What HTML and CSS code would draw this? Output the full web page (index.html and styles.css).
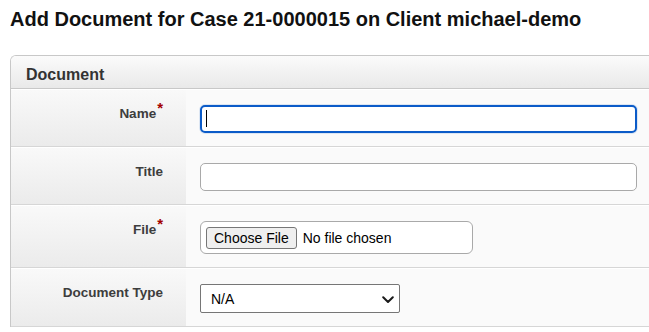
FILE: index.html
```html
<!DOCTYPE html>
<html lang="en">
<head>
    <meta charset="UTF-8">
    <meta name="viewport" content="width=device-width, initial-scale=1.0">
    <title>Add Document</title>
    <link rel="stylesheet" href="styles.css">
</head>
<body>

<div class="page">
    <h1>Add Document for Case 21-0000015 on Client michael-demo</h1>

    <form class="panel" action="#">
        <div class="panel-heading">Document</div>

        <div class="form-row">
            <label class="form-label" for="name">Name<sup class="req">*</sup></label>
            <div class="form-field">
                <span class="input-wrap">
                    <input type="text" id="name" name="name" class="text-input focused">
                    <span class="caret"></span>
                </span>
            </div>
        </div>

        <div class="form-row">
            <label class="form-label" for="title">Title</label>
            <div class="form-field">
                <input type="text" id="title" name="title" class="text-input">
            </div>
        </div>

        <div class="form-row">
            <label class="form-label" for="file">File<sup class="req">*</sup></label>
            <div class="form-field">
                <div class="file-box">
                    <input type="file" id="file" name="file">
                </div>
            </div>
        </div>

        <div class="form-row">
            <label class="form-label" for="docType">Document Type</label>
            <div class="form-field">
                <span class="select-wrap">
                    <select id="docType" name="docType">
                        <option>N/A</option>
                    </select>
                    <svg class="chevron" width="12" height="8" viewBox="0 0 12 8">
                        <path d="M1.2 1.3 L6 6 L10.8 1.3" fill="none" stroke="#1a1a1a" stroke-width="2" stroke-linecap="round" stroke-linejoin="round"/>
                    </svg>
                </span>
            </div>
        </div>
    </form>
</div>

</body>
</html>
```

FILE: styles.css
```css
body {
    font-family: "Liberation Sans", Arial, sans-serif;
    background-color: #fff;
    margin: 0;
    padding: 0;
    overflow: hidden;
}

.page {
    padding: 8px 0 0 10px;
}

h1 {
    font-size: 20px;
    line-height: 23px;
    color: #111;
    margin: 0 0 24px 0;
}

.panel {
    border: 1px solid #c8c8c8;
    border-right: none;
    border-bottom: none;
    border-radius: 6px 0 0 0;
    overflow: hidden;
}

.panel-heading {
    font-size: 16px;
    font-weight: bold;
    line-height: 18px;
    color: #333;
    padding: 10px 15px 4px;
    background: linear-gradient(#fbfbfb, #e9e9e9);
    border-bottom: 1px solid #c8c8c8;
}

.form-row {
    display: flex;
    margin-top: 1px;
    border-bottom: 1px solid #d6d6d6;
    background-color: #fafafa;
}

.form-label {
    width: 152px;
    flex-shrink: 0;
    padding: 15px 23px 13px 0;
    text-align: right;
    font-size: 13.5px;
    font-weight: bold;
    line-height: 18px;
    color: #3d3d3d;
    background: linear-gradient(#f9f9f9, #ebebeb);
}

.req {
    color: #a30000;
    font-size: 15px;
    line-height: 0;
    margin-left: 1px;
}

.form-field {
    padding: 15px 0 13px 14px;
}

.input-wrap {
    position: relative;
    display: block;
}

.text-input {
    display: block;
    box-sizing: border-box;
    width: 437px;
    height: 28px;
    padding: 0 8px;
    font-family: inherit;
    font-size: 14px;
    border: 1px solid #a9a9a9;
    border-radius: 5px;
    background-color: #fff;
    outline: none;
}

.text-input.focused {
    border: 2px solid #0b5bc8;
    box-shadow: 0 0 0 1px rgba(11, 91, 200, 0.12);
}

.caret {
    position: absolute;
    left: 6px;
    top: 5px;
    width: 1px;
    height: 17px;
    background-color: #000;
}

.file-box {
    box-sizing: border-box;
    width: 273px;
    height: 33px;
    padding: 5px;
    border: 1px solid #a9a9a9;
    border-radius: 6px;
    background-color: #fff;
}

.file-box input {
    font-family: inherit;
    font-size: 14px;
    color: #000;
}

.file-box input::file-selector-button {
    font-family: inherit;
    font-size: 14px;
    height: 22px;
    padding: 0 7px;
    margin-right: 6px;
    color: #000;
    background-color: #efefef;
    border: 1px solid #767676;
    border-radius: 3px;
}

.select-wrap {
    position: relative;
    display: inline-block;
}

select {
    display: block;
    width: 200px;
    height: 29px;
    padding: 0 0 0 10px;
    font-family: inherit;
    font-size: 14px;
    color: #000;
    background-color: #fff;
    border: 1px solid #767676;
    border-radius: 2px;
    appearance: none;
}

.chevron {
    position: absolute;
    right: 6px;
    top: 12px;
    pointer-events: none;
}
```
